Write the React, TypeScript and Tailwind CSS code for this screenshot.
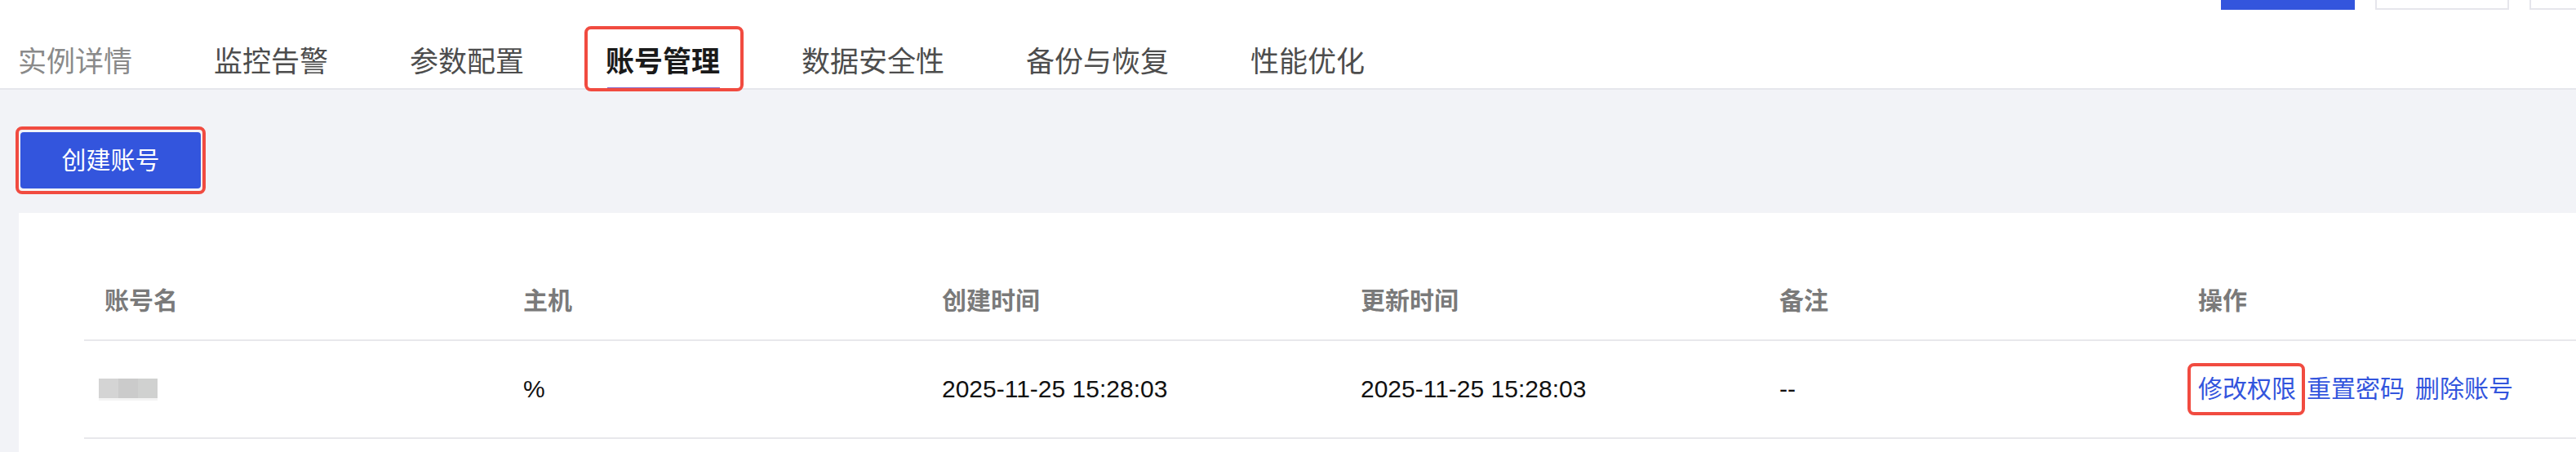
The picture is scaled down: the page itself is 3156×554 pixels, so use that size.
import React from "react"

const font = {
  fontFamily: '"Liberation Sans", "Noto Sans CJK SC", sans-serif',
}

const tabs = [
  { label: "实例详情", tone: "text-[#8a8a8a]" },
  { label: "监控告警", tone: "text-[#4d4d4d]" },
  { label: "参数配置", tone: "text-[#4d4d4d]" },
  { label: "账号管理", tone: "text-[#1a1a1a] font-bold", active: true },
  { label: "数据安全性", tone: "text-[#4d4d4d]" },
  { label: "备份与恢复", tone: "text-[#4d4d4d]" },
  { label: "性能优化", tone: "text-[#4d4d4d]" },
]

const columns = ["账号名", "主机", "创建时间", "更新时间", "备注", "操作"]

function Highlight({ className }: { className: string }) {
  return (
    <span
      className={`pointer-events-none absolute rounded-[8px] border-4 border-[#f14b40] ${className}`}
    />
  )
}

function TabBar() {
  return (
    <div className="flex h-[110px] flex-col border-b-2 border-[#e6e7ec] bg-white">
      <div className="-mr-[107px] flex h-[12px] justify-end gap-[25px]">
        <div className="h-full w-[164px] bg-[#3355dd]" />
        <div className="h-full w-[164px] border-2 border-t-0 border-[#e6e6ec]" />
        <div className="h-full w-[164px] border-2 border-t-0 border-[#e6e6ec]" />
      </div>
      <div className="flex h-[96px] gap-[100px] pl-[22px]">
        {tabs.map((tab) => (
          <div
            key={tab.label}
            className={`relative flex h-full items-center pt-[30px] text-[35px] leading-none ${tab.tone}`}
          >
            {tab.label}
            {tab.active && (
              <>
                <span className="absolute right-0 -bottom-[1px] left-[2px] h-[2px] bg-[#8a6cc8]" />
                <Highlight className="top-[20px] -right-[29px] -bottom-[4px] -left-[26px]" />
              </>
            )}
          </div>
        ))}
      </div>
    </div>
  )
}

function BlurredName() {
  return (
    <div className="-ml-[7px] flex flex-col">
      <div className="flex h-[24px]">
        <div className="w-[24px] bg-[#d4d4d4]" />
        <div className="w-[24px] bg-[#cbcbcb]" />
        <div className="w-[24px] bg-[#d0d1d0]" />
      </div>
      <div className="h-[3px] w-[72px] bg-[#f4f4f4]" />
    </div>
  )
}

export default function App() {
  return (
    <div
      className="flex h-[554px] w-[3156px] flex-col overflow-hidden bg-[#f2f3f7]"
      style={font}
    >
      <TabBar />

      <div className="mt-[52px] ml-[25px]">
        <button className="relative flex h-[69px] w-[221px] items-center justify-center rounded-[4px] bg-[#3355dd] text-[30px] leading-none text-white">
          创建账号
          <Highlight className="-inset-[7px] -right-[6px] -left-[6px]" />
        </button>
      </div>

      <div className="mt-[30px] ml-[23px] flex-1 bg-white pt-[61px] pl-[80px]">
        <div className="flex h-[96px] border-b-2 border-[#e8e8ec]">
          {columns.map((c) => (
            <div
              key={c}
              className="flex w-[513px] shrink-0 items-center pl-[25px] text-[30px] leading-none font-bold text-[#7a7a7a]"
            >
              {c}
            </div>
          ))}
        </div>
        <div className="flex h-[120px] border-b-2 border-[#e8e8ec] text-[30px] leading-none text-[#111]">
          <div className="flex w-[513px] shrink-0 items-center pl-[25px]">
            <BlurredName />
          </div>
          <div className="flex w-[513px] shrink-0 items-center pl-[25px]">%</div>
          <div className="flex w-[513px] shrink-0 items-center pl-[25px]">
            2025-11-25 15:28:03
          </div>
          <div className="flex w-[513px] shrink-0 items-center pl-[25px]">
            2025-11-25 15:28:03
          </div>
          <div className="flex w-[513px] shrink-0 items-center pl-[25px]">--</div>
          <div className="flex w-[513px] shrink-0 items-center gap-[13px] pl-[25px] text-[#3355dd]">
            <a className="relative">
              修改权限
              <Highlight className="-top-[17px] -right-[11px] -bottom-[17px] -left-[13px]" />
            </a>
            <a>重置密码</a>
            <a>删除账号</a>
          </div>
        </div>
      </div>
    </div>
  )
}
